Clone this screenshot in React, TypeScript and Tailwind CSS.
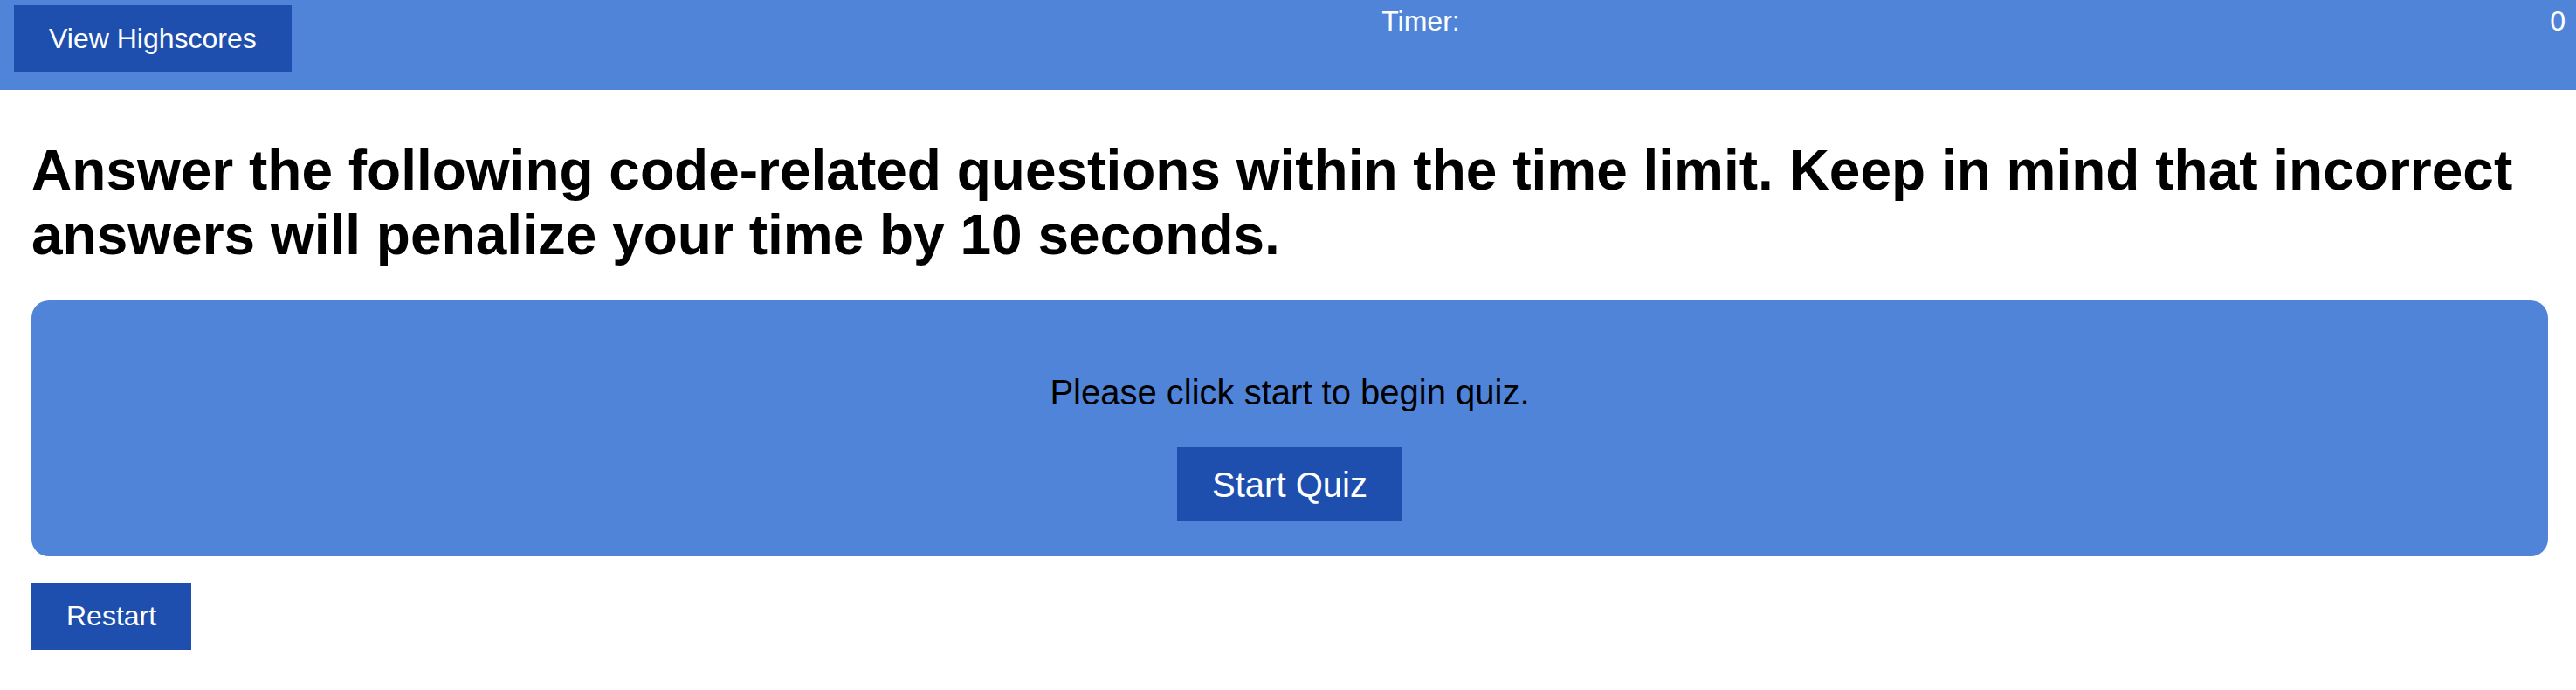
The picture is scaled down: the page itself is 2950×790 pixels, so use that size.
import React from "react";

export default function App() {
  return (
    <div className="min-h-[790px] bg-white font-['Liberation_Sans',Arial,sans-serif] text-black">
      <header className="flex h-[103px] items-start justify-between bg-[#4f84d9] pl-[16px] pr-[12px] pt-[6px] text-white">
        <button className="bg-[#1e4fae] px-[40px] py-[20px] text-[32px] leading-[37px] text-white">
          View Highscores
        </button>
        <div className="text-[32px] leading-[37px]">Timer:</div>
        <div className="text-[32px] leading-[37px]">0</div>
      </header>
      <main className="pl-[36px] pr-[32px]">
        <h1 className="mt-[56px] text-[64px] font-bold leading-[73.6px]">
          Answer the following code-related questions within the time limit. Keep in mind that incorrect answers will penalize your time by 10 seconds.
        </h1>
        <section className="mt-[38px] flex flex-col items-center rounded-[20px] bg-[#4f84d9] px-10 pb-[40px] pt-[40px]">
          <p className="mt-[42px] text-[40px] leading-[46px]">Please click start to begin quiz.</p>
          <button className="mt-[40px] bg-[#1e4fae] px-[40px] py-[19.5px] text-[40px] leading-[46px] text-white">
            Start Quiz
          </button>
        </section>
        <button className="mt-[30px] bg-[#1e4fae] px-[40px] py-[20px] text-[32px] leading-[37px] text-white">
          Restart
        </button>
      </main>
    </div>
  );
}
